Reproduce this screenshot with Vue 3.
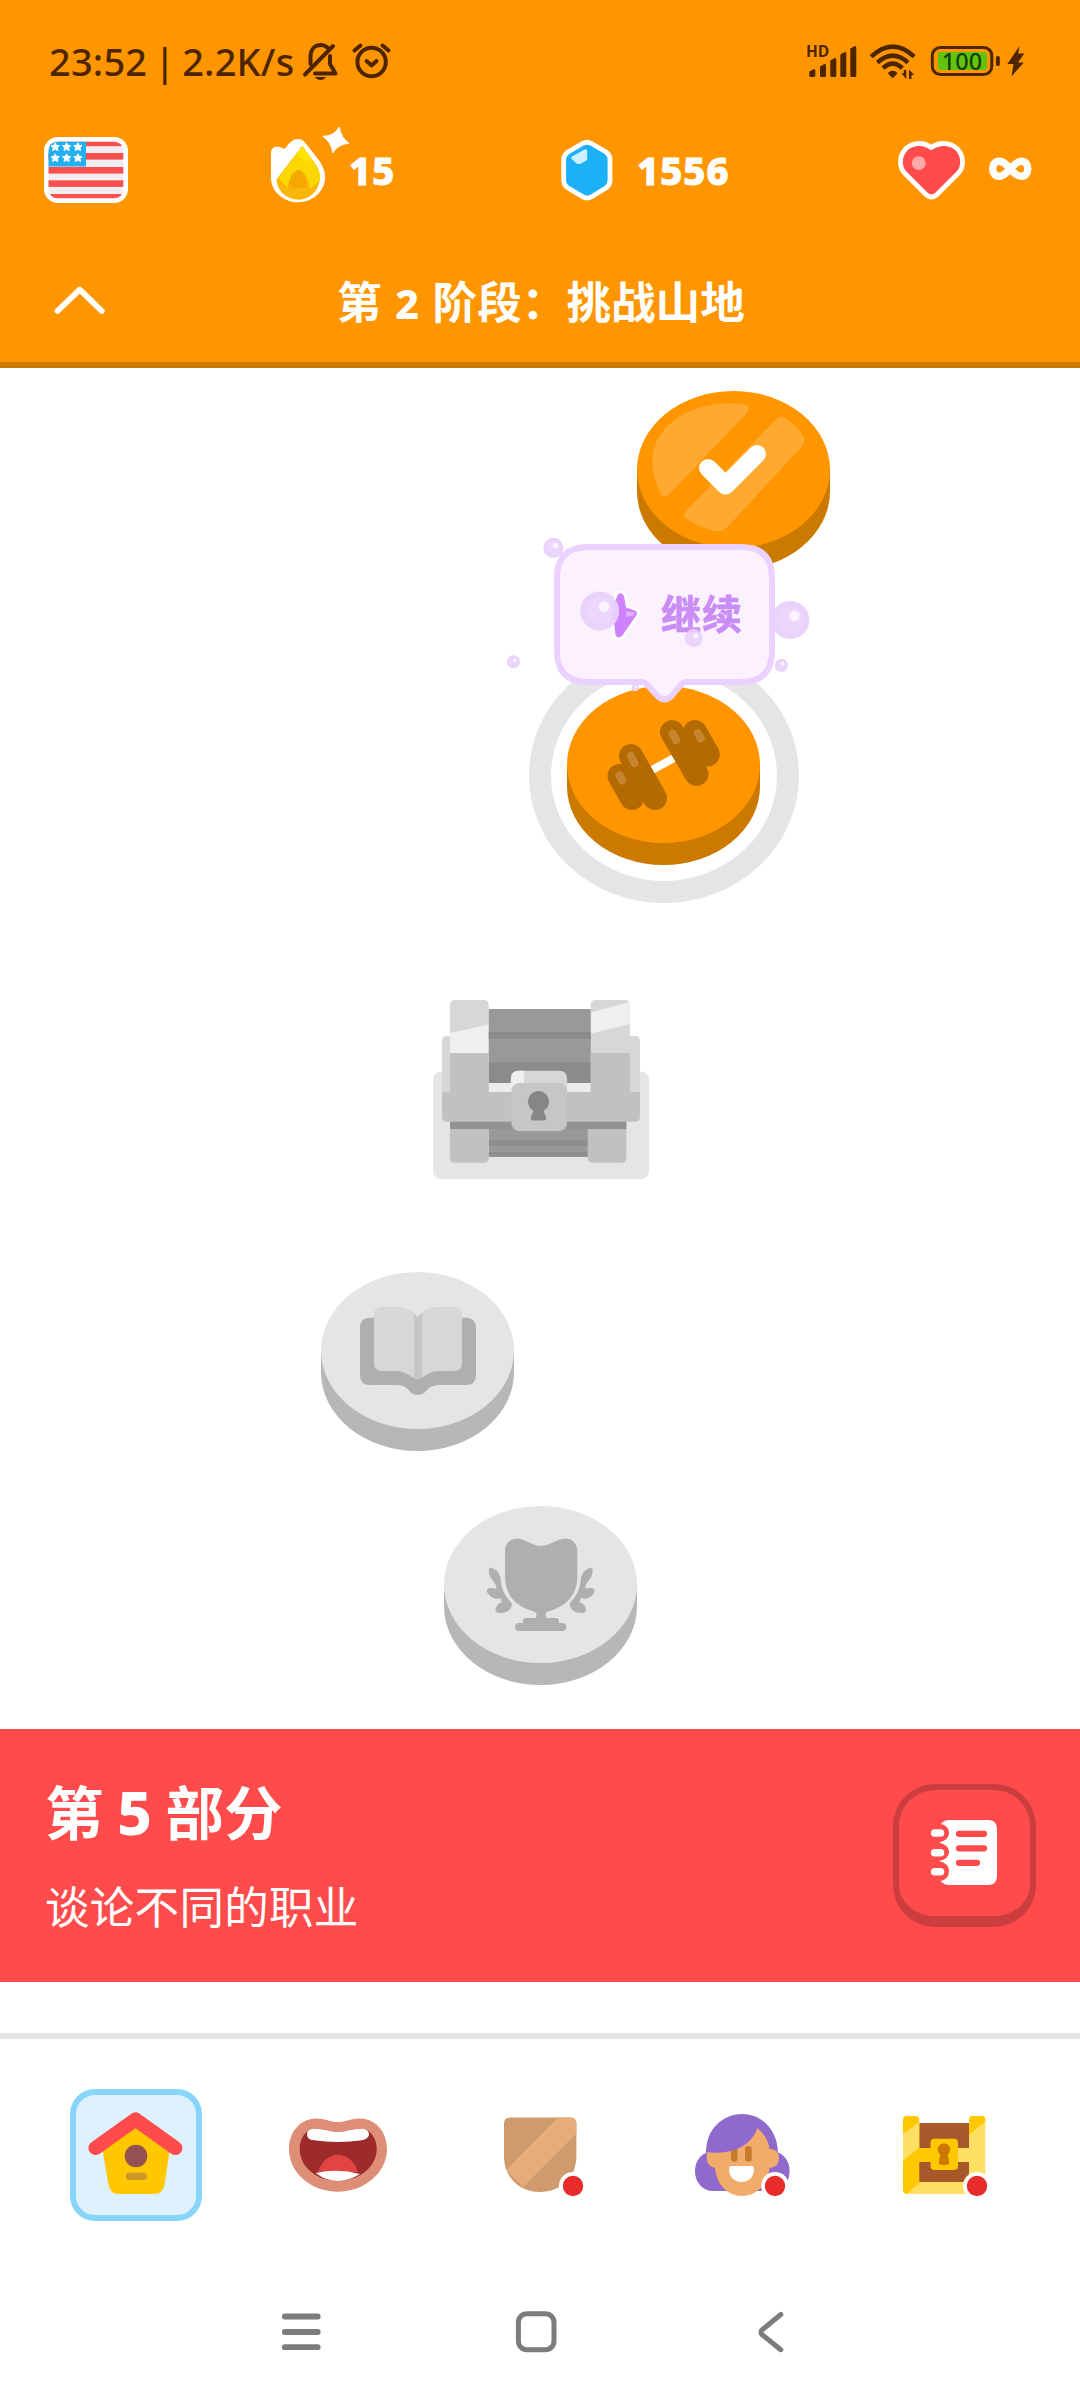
<script setup>
const stripes = [153, 167, 180.3, 194]
const stars = [147, 158].flatMap((y) => [55.2, 66.6, 77.9].map((x) => ({ x, y })))
const signal = [
  { x: 809.3, y: 69 },
  { x: 820, y: 64 },
  { x: 830.3, y: 58 },
  { x: 840.3, y: 52 },
  { x: 850.3, y: 46 },
]
const bubbles = [
  { x: 553.3, y: 547.7, r: 10 },
  { x: 599.7, y: 611, r: 19.5 },
  { x: 790.3, y: 620, r: 19 },
  { x: 693.7, y: 638, r: 9 },
  { x: 513.5, y: 661.7, r: 6.5 },
  { x: 781.3, y: 665.3, r: 6.5 },
  { x: 635.3, y: 687.7, r: 3.5 },
]
</script>

<template>
  <div class="screen">
    <header class="top">
      <div class="status">
        <span class="clock">23:52 | 2.2K/s</span>
        <svg class="alerts" viewBox="300 36 96 50" width="96" height="50" fill="none" stroke="#4d2600" stroke-width="4" stroke-linecap="round" stroke-linejoin="round">
          <path d="M305 74.5 L333 46" />
          <path d="M310.5 64 V57 C310.5 49 315 45 320.5 45 C323.5 45 326 46 328 48" />
          <path d="M330 56 V64 L335.5 73.5 H315" />
          <path d="M315 77 H326 C324 81 317 81 315 77 Z" fill="#4d2600" stroke="none" />
          <circle cx="371.6" cy="62" r="14.2" />
          <path d="M366.5 61 L371.6 65.5 L376.5 61 M354.5 50.5 L360.5 45.5 M382.5 45.5 L388.5 50.5" />
        </svg>
        <svg class="indicators" viewBox="800 36 240 50" width="240" height="50">
          <text x="806" y="57" class="hd">HD</text>
          <g fill="#4d2600">
            <path v-for="b in signal" :key="b.x" :d="`M${b.x} ${b.y + 2.5} L${b.x + 4.5} ${b.y} Q${b.x + 6} ${b.y - 0.5} ${b.x + 6} ${b.y + 2} V75.5 Q${b.x + 6} 77 ${b.x + 4.5} 77 H${b.x + 1.5} Q${b.x} 77 ${b.x} 75.5 Z`" />
            <path d="M887.8 73 Q892.7 68.7 897.6 73 Q896.5 75 892.7 78.3 Q889 75 887.8 73 Z" />
            <path d="M906.3 70 V79 L901.3 73.3 H903.8 V70 Z M909 79 V69.5 L914.4 75 H911.5 V79 Z" />
            <path d="M1019.5 46 L1007.3 64 H1013.5 L1011.5 76.3 L1023.8 62.5 H1018 L1024.3 53.5 H1018.3 Z" />
            <rect x="996" y="56" width="3.8" height="10" rx="1.6" />
          </g>
          <g fill="none" stroke="#4d2600" stroke-width="4.4">
            <path d="M871.2 56.7 Q892.7 36.5 914.2 56.7" />
            <path d="M877.4 62.6 Q892.7 48.6 908 62.6" />
            <path d="M883 68.2 Q892.7 59 902.4 68.2" />
          </g>
          <rect x="932.3" y="47.5" width="59.5" height="27" rx="8" fill="none" stroke="#4d2600" stroke-width="3" />
          <rect x="938" y="52" width="49" height="18" rx="3" fill="#62c30f" />
          <text x="962" y="70.3" text-anchor="middle" class="charge">100</text>
        </svg>
      </div>

      <div class="stats">
        <svg class="flag" viewBox="44 137 84 66" width="84" height="66">
          <defs>
            <clipPath id="flag-clip"><rect x="48.5" y="141.7" width="74.8" height="56.6" rx="9" /></clipPath>
          </defs>
          <rect x="44" y="137" width="84" height="66" rx="14" fill="#fff" />
          <g clip-path="url(#flag-clip)">
            <rect x="48" y="141" width="76" height="58" fill="#f1edf1" />
            <rect x="48" y="141" width="76" height="5.2" fill="#f9504f" />
            <rect v-for="y in stripes" :key="y" x="48" :y="y" width="76" height="6.6" fill="#f9504f" />
            <rect x="48" y="141" width="38" height="25.5" fill="#22b0f2" />
          </g>
          <path v-for="(s, i) in stars" :key="i" :transform="`translate(${s.x} ${s.y})`" fill="#fff" stroke="#fff" stroke-width="1" stroke-linejoin="round" d="M0 -4.2 L1.3 -1.6 L4.1 -1.3 L2 .7 L2.6 3.6 L0 2.2 L-2.6 3.6 L-2 .7 L-4.1 -1.3 L-1.3 -1.6 Z" />
        </svg>

        <div class="stat streak">
          <svg viewBox="270 122 82 82" width="82" height="82">
            <path fill="#fff" d="M271 152 C271 145 278 144.5 282 147 Q284 148.5 286 146.5 C290 141 293 138 298 138 Q302.5 138 305 141.5 L319.5 160 C334 181 318 201.3 298 201.3 C283 201.3 271 190 271 177 Z" />
            <path fill="#fbb60a" d="M302.3 145 L316 164 C326 180 315 198.7 298.5 198.7 C287 198.7 277.5 190 276.5 179.5 Q277 177.5 279 175 Z" />
            <path fill="#fbd800" d="M302.3 145 L316 164 Q321.5 172 319.5 180 L310 187.5 Q308 172 298.5 168.5 Q290 172 287.5 187 L278.5 177 Z" />
            <path fill="#fff000" opacity=".55" d="M297.5 151.5 L302.3 146 L311.5 158.5 Q303 164 297.5 151.5 Z" />
            <path fill="#f5a800" d="M298.5 169 Q307.5 174 307 186 Q299 190 288.5 185 Q289 173 298.5 169 Z" />
            <path fill="#fff" stroke="#fff" stroke-width="1" stroke-linejoin="round" d="M339.2 126 Q341 137 349 142.3 Q338 143 332.8 152 Q331.500 141 322.8 135.3 Q334 135.500 339.2 126 Z" />
          </svg>
          <span>15</span>
        </div>

        <div class="stat gems">
          <svg viewBox="560 138 54 64" width="54" height="64">
            <path d="M582.5 143.5 Q587 141 591.5 143.5 L606 152 Q610 155 610 159.5 V180.5 Q610 185 606 188 L591.5 196.7 Q587 199.3 582.5 196.7 L568 188 Q563.7 185 563.7 180.5 V159.5 Q563.7 155 568 152 Z" fill="#1cb0f6" stroke="#fff" stroke-width="4.8" />
            <path d="M572 156.5 L584.5 149.5 Q587.2 148.3 587.2 151.5 V160 L581 163.5 Q578 165 575.5 162.5 L571.7 159 Q570.5 157.5 572 156.5 Z" fill="#cfeeff" />
          </svg>
          <span>1556</span>
        </div>

        <div class="stat hearts">
          <svg viewBox="898 140 70 61" width="70" height="61">
            <path d="M932.3 147.5 C941 141.5 952 142.5 958.5 149 C965.5 157 965 168 958.5 174 L938 194.5 Q932.5 199.5 927 194.5 L906.5 174 C900 168 899.5 157 906.5 149 C913 142.5 924 141.5 932.3 147.5 Z" fill="#ff4b4b" stroke="#fff" stroke-width="4.8" />
            <circle cx="919.7" cy="163.2" r="6.9" fill="#ffa9a9" />
          </svg>
          <svg class="infinity" viewBox="988 156 46 26" width="46" height="26">
            <path d="M1011.2 169 C1006 163 1003.5 161.3 1000 161.3 C996 161.3 993.7 164.5 993.7 168.8 C993.7 173 996 176.3 1000 176.3 C1003.5 176.3 1006 174.8 1011.2 169 C1016.4 163 1019 161.3 1022.4 161.3 C1026.5 161.3 1028.8 164.5 1028.8 168.8 C1028.8 173 1026.5 176.3 1022.4 176.3 C1019 176.3 1016.4 174.8 1011.2 169 Z" fill="none" stroke="#fff" stroke-width="7.4" />
          </svg>
        </div>
      </div>

      <div class="stage">
        <svg viewBox="54 284 52 32" width="52" height="32"><path d="M57.5 311 L79.7 289.7 L101.8 311" fill="none" stroke="#fff" stroke-width="5.8" stroke-linecap="round" stroke-linejoin="round" /></svg>
        <h1>第<b>2</b>阶段：挑战山地</h1>
      </div>
    </header>

    <main class="path">
      <svg class="node done" viewBox="637 391 193 179" width="193" height="179">
        <path d="M637 469.5 V491.5 A96.5 78.5 0 0 0 830 491.5 V469.5 Z" fill="#cc7900" />
        <ellipse cx="733.5" cy="469.5" rx="96.5" ry="78.5" fill="#ff9600" />
        <path d="M662 495.5 C649 472 649 447 664 430 C682 409 715 400 745 404.5 Q751 406.5 747 413 L670.5 493 Q665 498.5 662 495.5 Z" fill="#ffa931" />
        <path d="M776 419.5 Q780 415 785 418 C793 423 799 429 803.5 436.5 Q806 441 802 446.5 L727.5 527 Q723 532 717 531 C705 529 694 524.5 686 518.5 Q682.5 515 686 510.5 Z" fill="#ffa931" />
        <path d="M708 468 L725.7 485.5 L757 454" fill="none" stroke="#fff" stroke-width="18" stroke-linecap="round" stroke-linejoin="round" />
      </svg>

      <div class="node current">
        <svg viewBox="529 648 270 255" width="270" height="255">
          <ellipse cx="664" cy="775.5" rx="124" ry="116.5" fill="#fff" stroke="#e5e5e5" stroke-width="22" />
          <path d="M567 764.5 V786.5 A96.5 78.5 0 0 0 760 786.5 V764.5 Z" fill="#cc7900" />
          <ellipse cx="663.5" cy="764.5" rx="96.5" ry="78.5" fill="#ff9600" />
          <path d="M651 770.5 L675 757.5" stroke="#fff" stroke-width="8" />
          <g stroke="#b36a00" stroke-width="24" stroke-linecap="round">
            <path d="M619.5 776 L632 798 M631 756 L655 798" />
            <path d="M672 732 L696.5 774 M695 732 L707.8 754.5" />
          </g>
          <path d="M630 775 L650 792 L640 800 Z M690 742 L700 762 L690 765 Z" fill="#b36a00" />
          <g stroke="#c8852f" stroke-width="8" stroke-linecap="round">
            <path d="M619.5 775.5 L622.3 780.5 M630.8 756 L634.5 763.3 M672.5 733.5 L676.2 740.3 M697.8 733 L700.8 738.3" />
          </g>
        </svg>
        <div class="tip">
          <svg class="balloon" viewBox="504 534 308 172" width="308" height="172">
            <path d="M588 547 H741 Q772 547 772 578 V651 Q772 682 741 682 H686 Q683 682 680 686 L671.5 696 Q664.5 702.5 657.5 696 L648.5 686 Q645.5 682 642 682 H588 Q557 682 557 651 V578 Q557 547 588 547 Z" fill="#fcf2ff" stroke="#ebd1ff" stroke-width="6" />
            <path d="M618 594 Q622 592 624 596 L626 607.5 L635 610.5 Q638 612 636.5 615 L622 636 Q618.5 639 615.5 635.5 L614 622 L609 618 Z" fill="#ce82ff" stroke="#fff" stroke-width="6" paint-order="stroke" />
            <path d="M626 611 L635 612.5 L633 615.5 L626.5 617 Z" fill="#dfb2ff" />
          </svg>
          <span>继续</span>
          <svg class="foam" viewBox="504 534 308 172" width="308" height="172">
            <g v-for="b in bubbles" :key="b.x">
              <circle :cx="b.x" :cy="b.y" :r="b.r" fill="#e8d0fc" opacity=".95" />
              <circle :cx="b.x" :cy="b.y" :r="b.r * 0.72" fill="#eddafc" opacity=".6" />
              <circle :cx="b.x + b.r * 0.22" :cy="b.y - b.r * 0.22" :r="b.r * 0.27" fill="#fbf3ff" />
            </g>
          </svg>
        </div>
      </div>

      <svg class="node chest" viewBox="433 1000 215 179" width="216" height="179" preserveAspectRatio="none">
        <rect x="433" y="1071.5" width="215" height="107.5" rx="8" fill="#e5e5e5" />
        <path d="M442 1041 Q442 1036 447 1036 H634 Q639 1036 639 1041 V1093 H442 Z" fill="#d7d7d7" />
        <path d="M450 1005 Q450 1000 455 1000 H483.5 Q488.5 1000 488.5 1005 V1060 H450 Z M590 1005 Q590 1000 595 1000 H624 Q629 1000 629 1005 V1060 H590 Z" fill="#d7d7d7" />
        <path d="M450 1033 L488.5 1024.5 V1054 H450 Z M590 1012.5 L628.5 1002 Q629 1003 629 1005 V1024 L590 1033.5 Z" fill="#efefef" />
        <rect x="488.5" y="1009" width="101.5" height="74" fill="#999" />
        <path d="M488.5 1032 H590 V1038.7 H488.5 Z M488.5 1062.3 H590 V1083 H488.5 Z" fill="#8b8b8b" />
        <rect x="488.5" y="1083" width="101.5" height="10" fill="#ececec" />
        <rect x="488.5" y="1121" width="101.5" height="35.7" fill="#999" />
        <path d="M488.5 1140 H590 V1146 H488.5 Z M488.5 1152 H590 V1156.7 H488.5 Z" fill="#8e8e8e" />
        <path d="M450 1053 H488.5 V1157.7 Q488.5 1162.7 483.5 1162.7 H455 Q450 1162.7 450 1157.7 Z M590 1053 H629 V1121 H625.5 V1157.7 Q625.5 1162.7 620.5 1162.7 H592 Q587 1162.7 587 1157.7 V1121 H590 Z" fill="#c1c1c1" />
        <rect x="450" y="1121" width="175.5" height="8" fill="#929292" />
        <path d="M442 1092 H639 V1117 Q639 1121.7 634 1121.7 H447 Q442 1121.7 442 1117 Z" fill="#c1c1c1" />
        <path d="M510.5 1079 Q510.5 1070.7 518.5 1070.7 H558.5 Q566.5 1070.7 566.5 1079 V1092 H510.5 Z" fill="#d7d7d7" />
        <path d="M510.5 1079 Q510.5 1070.7 518.5 1070.7 H523.4 V1092 H510.5 Z" fill="#efefef" />
        <rect x="511" y="1083" width="55.5" height="48" rx="8" fill="#c6c6c6" />
        <circle cx="538" cy="1101.5" r="10.5" fill="#868686" />
        <path d="M533.5 1107 H542.5 Q542.5 1111 545 1116 Q547 1120.5 543 1120.5 H532.5 Q529 1120.5 531 1116 Q533.5 1111 533.5 1107 Z" fill="#868686" />
      </svg>

      <svg class="node book" viewBox="321 1272 193 179" width="193" height="179">
        <path d="M321 1350.5 V1372.5 A96.5 78.5 0 0 0 514 1372.5 V1350.5 Z" fill="#b7b7b7" />
        <ellipse cx="417.5" cy="1350.5" rx="96.5" ry="78.5" fill="#e5e5e5" />
        <path d="M370 1317.7 H466 Q476 1317.7 476 1328 V1375 Q476 1385 466 1385 H440 Q431 1385 427 1390 C422 1396.5 413 1396.5 408.5 1390 Q405 1385 396 1385 H370 Q360 1385 360 1375 V1328 Q360 1317.7 370 1317.7 Z" fill="#afafaf" />
        <path d="M382 1307 H398 Q412 1307 417.7 1317.5 Q423.5 1307 437 1307 H454 Q462 1307 462 1315 V1363 Q462 1371 454 1371 H439 C428 1371 423 1379 417.7 1379 C412.5 1379 407 1371 396 1371 H382 Q374 1371 374 1363 V1315 Q374 1307 382 1307 Z" fill="#d7d7d7" />
        <path d="M414 1312.5 L417.7 1317.5 L421.8 1312.5 V1377 Q418 1380.5 414 1377 Z" fill="#c6c6c6" />
      </svg>

      <svg class="node trophy" viewBox="444 1506 193 179" width="193" height="179">
        <path d="M444 1584.5 V1606.5 A96.5 78.5 0 0 0 637 1606.5 V1584.5 Z" fill="#b7b7b7" />
        <ellipse cx="540.5" cy="1584.5" rx="96.5" ry="78.5" fill="#e5e5e5" />
        <g fill="#afafaf">
          <path d="M505 1551 C505 1541 514 1536.5 522 1539.5 C531 1543 535 1546 541 1546 C547 1546 551 1543 560 1539.5 C568 1536.5 577.3 1541 577.3 1551 V1576 C577.3 1595 567 1606 548 1611.5 Q545 1612.5 545.5 1615 L546.5 1618 H556 Q559 1618 559 1621 V1623 H562.5 Q566.3 1623 566.3 1627 Q566.3 1631 562.5 1631 H519 Q515 1631 515 1627 Q515 1623 519 1623 H523 V1621 Q523 1618 526 1618 H535.5 L536.5 1615 Q537 1612.5 534 1611.5 C515 1606 505 1595 505 1576 Z" />
          <path id="laurel" d="M491 1567.5 Q501 1571 501 1582 C502 1591 506 1597 512 1603.5 Q511 1613 500 1613 Q495 1613 495.5 1609 Q497 1603 503 1602 Q500 1601 501 1598 Q492 1601 487 1592 Q486 1588 491 1588 L496 1588.5 Q497 1586 494 1582 Q488 1576 489 1569 Q489.5 1567.5 491 1567.5 Z" />
          <use href="#laurel" transform="translate(1081.5 0) scale(-1 1)" />
        </g>
      </svg>
    </main>

    <section class="unit">
      <div class="unit-text">
        <h2>第<b>5</b>部分</h2>
        <p>谈论不同的职业</p>
      </div>
      <div class="guide">
        <svg viewBox="929 1818 70 70" width="70" height="70">
          <path d="M949 1820 H988 Q997 1820 997 1829 V1876 Q997 1885 988 1885 H949 Q944 1885 940.5 1881 Q949 1879 949 1871 Q949 1863.5 939 1861 Q949 1859 949 1852 Q949 1845 939 1842.5 Q949 1840 949 1833 Q949 1826 941 1824 Q944 1820 949 1820 Z" fill="#fff" />
          <path d="M934.7 1833 H940.5 M934.7 1852.7 H940.5 M934.7 1871.8 H940.5" stroke="#fff" stroke-width="7.6" stroke-linecap="round" />
          <path d="M959 1833.8 H984 M959 1848.3 H984 M959 1862.8 H977" stroke="#ff4b4b" stroke-width="6.3" stroke-linecap="round" />
        </svg>
      </div>
    </section>

    <nav class="tabs">
      <div class="tab">
        <div class="selected">
          <svg viewBox="86 2105 100 100" width="100" height="100">
            <path d="M135.5 2121 L170 2147 L164.8 2184 Q163 2194 154 2194 H118.5 Q110 2194 108.3 2184 L102 2147 Z" fill="#ffc700" />
            <path d="M95.5 2148 L135.5 2119.5 L175.3 2148" fill="none" stroke="#ff4b4b" stroke-width="14.2" stroke-linecap="round" stroke-linejoin="round" />
            <circle cx="136" cy="2156" r="11.3" fill="#945151" />
            <rect x="125.7" y="2172.7" width="21.3" height="7.3" rx="3.6" fill="#cd9729" />
          </svg>
        </div>
      </div>
      <div class="tab">
        <svg viewBox="288 2105 100 100" width="100" height="100">
          <path d="M315 2118.5 C324 2118 330 2122 338 2122 C346 2122 352 2118 361 2118.5 C377 2119.5 387 2133 387 2149 C387 2173 364 2191.7 338 2191.7 C311 2191.7 289 2173 289 2149 C289 2133 299 2119.5 315 2118.5 Z" fill="#de8e76" />
          <path d="M313 2129 C322 2128 330 2132 338 2132 C346 2132 354 2128 363 2129 C371 2130 376.7 2139 376.7 2149 C376.7 2167 359 2181 338 2181 C317 2181 299.7 2167 299.7 2149 C299.7 2139 305 2130 313 2129 Z" fill="#9e2b2b" />
          <path d="M318 2172 C321 2161 330 2154.7 338 2154.7 C346 2154.7 355 2161 358 2172 Z" fill="#e24343" />
          <path d="M312 2129 C322 2128 330 2132 338 2132 C346 2132 354 2128 364 2129 Q369 2130 369 2135 Q368 2139 362 2140.3 Q338 2143.7 312 2140 Q307 2139 307 2134 Q307 2130 312 2129 Z M315.7 2173 Q338 2168 360 2174 Q349 2181 338 2181 Q326 2181 315.7 2173 Z" fill="#fff" />
        </svg>
      </div>
      <div class="tab">
        <svg viewBox="490 2105 100 100" width="100" height="100">
          <defs>
            <clipPath id="shield"><path d="M510 2117.5 H570.4 Q576.4 2117.5 576.4 2123.5 V2156 C576.4 2178 560 2192 540 2192 C520 2192 504 2178 504 2156 V2123.5 Q504 2117.5 510 2117.5 Z" /></clipPath>
          </defs>
          <g clip-path="url(#shield)">
            <path d="M500 2110 H580 V2200 H500 Z" fill="#cf9b6d" />
            <path d="M557.5 2118 L506 2170 L523 2187 L577 2133 V2115 H560 Z" fill="#e4ad7b" />
          </g>
          <circle cx="573" cy="2186" r="14" fill="#fff" />
          <circle cx="573" cy="2186" r="10.2" fill="#e82b2b" />
        </svg>
      </div>
      <div class="tab">
        <svg viewBox="692 2105 100 100" width="100" height="100">
          <path d="M709 2152 C700 2154 695 2162 695 2171 C695 2183 703 2191 713 2191 H771 C782 2191 789.6 2183 789.6 2171 C789.6 2162 785 2155 777 2152 Z" fill="#9069cd" />
          <path d="M706 2152 C706 2129 723 2114 742 2114 C762 2114 778 2130 778 2154 L771 2160 H710 Z" fill="#9069cd" />
          <path d="M707.5 2152 L730 2143 L757.5 2128 Q768 2137 769.5 2149 Q779 2149 779 2158 Q779 2167 769.5 2168 C768 2185 756 2196 742 2196 C728 2196 716.5 2185 715 2168 Q707 2166 706.7 2158 Q706.5 2155 707.5 2152 Z" fill="#f1ab6b" />
          <path d="M731 2144 H737.5 V2158.5 A3.25 3.25 0 0 1 731 2158.5 Z" fill="#c67c2c" />
          <rect x="745" y="2146" width="6.7" height="15.7" rx="3.3" fill="#c67c2c" />
          <path d="M706 2152 C730 2155 750 2148 757.5 2128 L742 2118 L716 2135 Z" fill="#9069cd" />
          <path d="M731.5 2166 H751.5 Q754 2166 754 2168.5 C754 2177 749 2182 741.5 2182 C734 2182 729 2177 729 2168.5 Q729 2166 731.5 2166 Z" fill="#fff" />
          <circle cx="775" cy="2186" r="14" fill="#fff" />
          <circle cx="775" cy="2186" r="10.2" fill="#e82b2b" />
        </svg>
      </div>
      <div class="tab">
        <svg viewBox="894 2105 100 100" width="100" height="100">
          <rect x="910" y="2123" width="68" height="62" fill="#a8592b" />
          <rect x="910" y="2182" width="68" height="12" fill="#ffe065" />
          <path d="M919 2148 H969 V2162 H919 Z" fill="#ffe065" />
          <path d="M919 2148 H931 V2162 H919 Z" fill="#ffc800" />
          <rect x="903" y="2116" width="16.3" height="78" rx="4" fill="#ffc800" />
          <path d="M903 2134.5 L919.3 2122 V2147.5 L903 2161 Z" fill="#ffe065" />
          <path d="M907 2194 L919.3 2183 V2194 Z" fill="#ffe065" />
          <rect x="969" y="2116" width="16.3" height="78" rx="4" fill="#ffe065" />
          <path d="M969 2120 Q969 2116 973 2116 H981 Q985.3 2116 985.3 2120 V2121.5 L969 2135 Z" fill="#ffc800" />
          <rect x="930.5" y="2138.7" width="27.5" height="31.3" rx="4" fill="#ffc800" />
          <circle cx="944" cy="2149.5" r="6.2" fill="#cd7900" />
          <path d="M940.5 2151 H947.5 Q947.5 2156 949 2161 Q949.5 2165 946 2165 H942 Q938.5 2165 939 2161 Q940.5 2156 940.5 2151 Z" fill="#cd7900" />
          <circle cx="977" cy="2186" r="14" fill="#fff" />
          <circle cx="977" cy="2186" r="10.2" fill="#e82b2b" />
        </svg>
      </div>
    </nav>

    <footer class="system">
      <svg viewBox="280 2306 42 52" width="42" height="52"><path d="M284.8 2316.5 H317.7 M284.8 2332 H317.7 M284.8 2347.2 H317.7" stroke="#7c7c7e" stroke-width="5.8" stroke-linecap="round" /></svg>
      <svg viewBox="515 2306 42 52" width="42" height="52"><rect x="518.4" y="2313.8" width="35.6" height="36" rx="8.5" fill="none" stroke="#7c7c7e" stroke-width="5" /></svg>
      <svg viewBox="750 2306 42 52" width="42" height="52"><path d="M780.8 2314.5 L762.5 2329.5 Q759.5 2332 762.5 2335 L780.8 2349.7" fill="none" stroke="#7c7c7e" stroke-width="5" stroke-linecap="round" stroke-linejoin="round" /></svg>
    </footer>
  </div>
</template>

<style>
body {
  margin: 0;
}
</style>

<style scoped>
.screen {
  width: 1080px;
  height: 2400px;
  overflow: hidden;
  display: flex;
  flex-direction: column;
  background: #fffffd;
  font-family: "Noto Sans", "Noto Sans CJK SC", sans-serif;
}
svg {
  display: block;
  flex: none;
  overflow: visible;
}
.top {
  box-sizing: border-box;
  height: 368px;
  border-bottom: 6px solid #cc7900;
  background: #ff9600;
  color: #fff;
}
.status {
  height: 121px;
  display: flex;
  align-items: center;
  padding: 0 40px 0 49px;
}
.clock {
  width: 251px;
  font: 500 38px/50px "Noto Sans", sans-serif;
  letter-spacing: 0.2px;
  word-spacing: -3.2px;
  color: #4d2600;
  white-space: nowrap;
}
.indicators {
  margin-left: auto;
}
.hd {
  font: 700 15.5px "Open Sans", sans-serif;
  fill: #4d2600;
}
.charge {
  font: 500 23.5px "Noto Sans", sans-serif;
  fill: #17400a;
}
.stats {
  height: 98px;
  display: flex;
  align-items: center;
  padding-left: 44px;
}
.stat {
  display: flex;
  align-items: center;
  font: 800 38px/50px "Noto Sans", sans-serif;
  letter-spacing: 1.2px;
  -webkit-text-stroke: 1px #fff;
  stroke-linejoin: round;
}
.streak {
  margin-left: 142px;
}
.streak svg {
  margin-top: -13px;
}
.streak span {
  width: 60px;
  margin-left: -3px;
}
.gems {
  margin-left: 151px;
}
.gems span {
  width: 120px;
  margin-left: 23px;
}
.hearts {
  margin-left: 140px;
  gap: 20px;
}
.infinity {
  margin-top: -3px;
}
.stage {
  height: 143px;
  display: flex;
  align-items: center;
  padding: 18px 0 0 54px;
  box-sizing: border-box;
}
h1, h2, p {
  margin: 0;
  white-space: nowrap;
}
h1 {
  margin-left: 231px;
  font: 700 44.6px/60px "Noto Sans CJK SC", sans-serif;
}
h1 b {
  display: inline-block;
  width: 51px;
  text-align: center;
  font: 800 41px/50px "Noto Sans", sans-serif;
}
.path {
  height: 1361px;
  padding-top: 23px;
  box-sizing: border-box;
}
.current {
  position: relative;
  width: 270px;
  margin: 78px 0 0 529px;
}
.tip {
  position: absolute;
  left: -25px;
  top: -114px;
  width: 308px;
  height: 172px;
}
.tip svg {
  position: absolute;
  inset: 0;
}
.tip span {
  position: absolute;
  left: 157px;
  top: 48px;
  font: 700 40px/60px "Noto Sans CJK SC", sans-serif;
  letter-spacing: 1px;
  color: #c98df5;
  -webkit-text-stroke: 0.7px #c98df5;
}
.done {
  margin-left: 637px;
}
.chest {
  margin: 97px 0 0 433px;
}
.book {
  margin: 93px 0 0 321px;
}
.trophy {
  margin: 55px 0 0 444px;
}
.unit {
  height: 253px;
  box-sizing: border-box;
  display: flex;
  align-items: center;
  justify-content: space-between;
  padding: 0 44px 0 45px;
  background: #ff4b4b;
  color: #fff;
}
.unit-text {
  padding-bottom: 7px;
}
h2 {
  font: 700 58.5px/80px "Noto Sans CJK SC", sans-serif;
}
h2 b {
  display: inline-block;
  width: 62px;
  text-align: center;
  font: 800 60px/70px "Noto Sans", sans-serif;
}
p {
  margin-top: 25px;
  font: 400 44.5px/60px "Noto Sans CJK SC", sans-serif;
  letter-spacing: 0.3px;
}
.guide {
  width: 143px;
  height: 143px;
  box-sizing: border-box;
  display: flex;
  align-items: center;
  justify-content: center;
  padding-right: 1px;
  border: 6px solid #cc3e3e;
  border-bottom-width: 11px;
  border-radius: 42px;
}
.tabs {
  height: 233px;
  box-sizing: border-box;
  margin-top: 51px;
  padding: 0 35px;
  border-top: 6px solid #e5e5e5;
  display: flex;
}
.tab {
  width: 202px;
  height: 232px;
  display: flex;
  align-items: center;
  justify-content: center;
}
.selected {
  width: 120px;
  height: 120px;
  display: flex;
  align-items: center;
  justify-content: center;
  border: 6px solid #89d4fa;
  border-radius: 25px;
  background: #def1ff;
}
.system {
  height: 132px;
  display: flex;
  align-items: center;
  gap: 193px;
  padding-left: 280px;
}
</style>
